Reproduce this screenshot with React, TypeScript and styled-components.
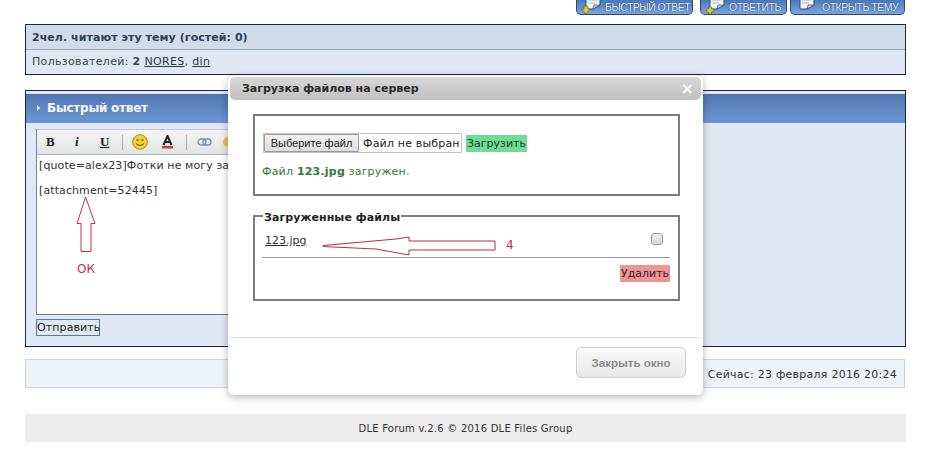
import React from "react";
import styled, { createGlobalStyle } from "styled-components";

const Global = createGlobalStyle`
  html, body { margin: 0; padding: 0; background: #fff; }
  body { font-family: "DejaVu Sans", Verdana, sans-serif; font-size: 11px; color: #333; }
`;

const Page = styled.div`
  position: relative;
  width: 933px;
  height: 458px;
  overflow: hidden;
  padding: 0 27px 0 25px;
  box-sizing: border-box;
`;

const TopBar = styled.div`
  display: flex;
  justify-content: flex-end;
  height: 15px;
  gap: 3px;
  padding-right: 1px;
`;

const TopButton = styled.div<{ $w: number; $ml?: number }>`
  width: ${(p) => p.$w}px;
  margin-left: ${(p) => p.$ml ?? 0}px;
  height: 15px;
  box-sizing: border-box;
  display: flex;
  align-items: center;
  border: 1px solid #2b4a70;
  border-top: 0;
  border-radius: 0 0 5px 5px;
  background: linear-gradient(#4a78b8, #7ba6e0);
  overflow: hidden;
  font: 10.5px "Liberation Sans", Arial, sans-serif;
  letter-spacing: -0.5px;
  color: #e9f2ff;
  text-shadow: 0 0 1px #1d3f72, 0 0 1px #1d3f72;
  white-space: nowrap;
`;

const TopIcon = styled.svg`
  flex: none;
  margin: 0 2px 0 4px;
`;

const TopLabel = styled.span<{ $pad: number }>`
  padding-left: ${(p) => p.$pad}px;
`;

const OnlineBox = styled.section`
  margin-top: 9px;
  width: 881px;
  height: 51px;
  box-sizing: border-box;
  border: 1px solid #13293f;
  background: #e0e7f2;
`;

const OnlineHead = styled.div`
  height: 25px;
  box-sizing: border-box;
  padding: 0 6px;
  display: flex;
  align-items: center;
  background: #d0dcea;
  border-bottom: 1px solid #93a3b5;
  font-weight: bold;
  color: #2f4058;
  letter-spacing: 0.06px;
`;

const OnlineRow = styled.div`
  height: 24px;
  padding: 0 6px;
  line-height: 24px;
  white-space: pre;
  color: #3a4450;
  letter-spacing: 0.33px;
`;

const UserLink = styled.a`
  color: #2c3a4c;
  text-decoration: underline;
`;

const ReplyBox = styled.section`
  position: relative;
  margin-top: 15px;
  width: 881px;
  height: 257px;
  box-sizing: border-box;
  border: 1px solid #13293f;
  background: #e0e8f3;
  padding: 3px 0 0 0;
`;

const ReplyHead = styled.div`
  height: 29px;
  box-sizing: border-box;
  padding: 0 0 2px 11px;
  display: flex;
  align-items: center;
  gap: 7px;
  background: linear-gradient(#5076b2, #6c98d6);
  font: bold 12px "DejaVu Sans", Verdana, sans-serif;
  color: #f4f7fc;
  letter-spacing: -0.25px;
`;

const Bullet = styled.span`
  width: 0;
  height: 0;
  border-left: 3px solid #e8eef8;
  border-top: 3px solid transparent;
  border-bottom: 3px solid transparent;
`;

const ReplyBody = styled.div`
  padding: 6px 0 0 10px;
`;

const Editor = styled.div`
  position: relative;
  width: 640px;
  height: 186px;
  box-sizing: border-box;
  border-left: 1px solid #6f8aa8;
  border-bottom: 1px solid #5d7a9c;
  background: #fff;
`;

const Toolbar = styled.div`
  height: 26px;
  box-sizing: border-box;
  display: flex;
  align-items: center;
  padding-left: 9px;
  background: linear-gradient(#f5f5f5, #e2e3e4);
  border-top: 1px solid #c3c9d0;
  border-bottom: 1px solid #aab4c0;
  color: #222;
`;

const ToolLetter = styled.span<{ $w: number; $i?: boolean; $u?: boolean }>`
  width: ${(p) => p.$w}px;
  font: ${(p) => (p.$i ? "italic bold" : "bold")} 13px "Liberation Serif", serif;
  text-decoration: ${(p) => (p.$u ? "underline" : "none")};
`;

const ToolSep = styled.span<{ $ml: number; $mr: number }>`
  width: 1px;
  height: 15px;
  margin: 0 ${(p) => p.$mr}px 0 ${(p) => p.$ml}px;
  background: #a8aeb5;
`;

const ToolIcon = styled.svg<{ $mr?: number }>`
  flex: none;
  margin-right: ${(p) => p.$mr ?? 0}px;
`;

const EditorText = styled.div`
  padding: 5px 0 0 2px;
  line-height: 12.5px;
  color: #333;
  letter-spacing: 0.1px;
  white-space: pre;
`;

const UpArrow = styled.svg`
  position: absolute;
  left: 39px;
  top: 67px;
`;

const OkNote = styled.span`
  position: absolute;
  left: 40px;
  top: 133px;
  color: #c8303f;
  font: 12px "DejaVu Sans", sans-serif;
`;

const SendButton = styled.button`
  display: block;
  margin-top: 4px;
  width: 64px;
  height: 17px;
  padding: 0;
  box-sizing: border-box;
  border: 1px solid #5d7a9c;
  background: #e0e8f3;
  color: #222;
  font: 11px "DejaVu Sans", sans-serif;
  letter-spacing: 0.1px;
`;

const NavBar = styled.div`
  margin-top: 12px;
  width: 880px;
  height: 29px;
  box-sizing: border-box;
  border: 1px solid #cbd3dc;
  background: #eef3f8;
  display: flex;
  align-items: center;
  justify-content: flex-end;
  padding: 1px 7px 0 0;
  color: #333;
  letter-spacing: 0.24px;
`;

const Footer = styled.footer`
  margin-top: 26px;
  width: 881px;
  height: 28px;
  background: #ededed;
  display: flex;
  align-items: center;
  justify-content: center;
  font-size: 10px;
  color: #333;
  letter-spacing: 0.23px;
`;

const Modal = styled.div`
  position: absolute;
  left: 228px;
  top: 76px;
  width: 475px;
  height: 319px;
  box-sizing: border-box;
  padding: 1px 2px 0 2px;
  background: #fff;
  border-radius: 6px;
  box-shadow: 0 2px 8px rgba(0, 0, 0, 0.3);
  display: flex;
  flex-direction: column;
`;

const ModalHead = styled.div`
  height: 23px;
  flex: none;
  box-sizing: border-box;
  padding: 0 7px 0 12px;
  display: flex;
  align-items: center;
  justify-content: space-between;
  border-radius: 5px;
  background: linear-gradient(#d8d8d8, #c0c0c0);
  font-weight: bold;
  color: #2a2a2a;
`;

const CloseX = styled.span`
  color: #fff;
  font: bold 16px "DejaVu Sans", sans-serif;
  line-height: 1;
`;

const ModalBody = styled.div`
  flex: 1;
  padding: 14px 21px 0 23px;
`;

const UploadPanel = styled.div`
  height: 82px;
  box-sizing: border-box;
  border: 2px solid #7c7c7c;
  padding: 17px 0 0 8px;
`;

const UploadRow = styled.div`
  display: flex;
  align-items: center;
`;

const FakeFile = styled.div`
  display: flex;
  height: 20px;
  width: 199px;
  box-sizing: border-box;
  border: 1px solid #c4c4c4;
  align-items: center;
  letter-spacing: 0.18px;
  color: #222;
  white-space: nowrap;
`;

const ChooseButton = styled.span`
  width: 95px;
  height: 18px;
  margin-right: 4px;
  box-sizing: border-box;
  flex: none;
  display: flex;
  align-items: center;
  justify-content: center;
  background: linear-gradient(#f2f2f2, #dedede);
  border: 1px solid #9a9a9a;
  border-radius: 1px;
  font: 11px "Liberation Sans", Arial, sans-serif;
  letter-spacing: 0;
`;

const UploadButton = styled.button`
  margin-left: 4px;
  width: 61px;
  height: 17px;
  padding: 0;
  border: 0;
  background: #6edc92;
  color: #1f3a2a;
  font: 11px "DejaVu Sans", sans-serif;
`;

const Status = styled.p`
  margin: 12px 0 0 -1px;
  color: #35793a;
  letter-spacing: 0.2px;
`;

const FilesPanel = styled.fieldset`
  position: relative;
  margin: 12px 0 0 0;
  padding: 0 8px 0 7px;
  height: 93px;
  box-sizing: border-box;
  border: 2px solid #7c7c7c;
  min-width: 0;
`;

const FilesLegend = styled.legend`
  padding: 3px 1px 0;
  margin-left: 1px;
  font-weight: bold;
  color: #222;
  letter-spacing: 0.08px;
`;

const FileRow = styled.div`
  position: relative;
  height: 28px;
  display: flex;
  align-items: center;
  justify-content: space-between;
  padding: 0 7px 0 3px;
  margin-top: 5px;
  border-bottom: 1px solid #999;
`;

const FileLink = styled.a`
  color: #333;
  text-decoration: underline;
  margin-top: -5px;
`;

const FileCheck = styled.span`
  width: 12px;
  height: 12px;
  margin-top: -8px;
  box-sizing: border-box;
  border: 1px solid #9a9a9a;
  border-radius: 3px;
  background: linear-gradient(#eee, #d8d8d8);
`;

const LeftArrow = styled.svg`
  position: absolute;
  left: 60px;
  top: 7px;
`;

const NoteFour = styled.span`
  position: absolute;
  left: 244px;
  top: 9px;
  color: #c8303f;
  font: 12px "DejaVu Sans", sans-serif;
`;

const DeleteRow = styled.div`
  display: flex;
  justify-content: flex-end;
  margin-top: 7px;
`;

const DeleteButton = styled.button`
  width: 50px;
  height: 17px;
  padding: 0;
  border: 0;
  background: #ee9497;
  color: #3a1a1a;
  font: 11px "DejaVu Sans", sans-serif;
`;

const ModalFoot = styled.div`
  flex: none;
  height: 58px;
  box-sizing: border-box;
  border-top: 1px solid #e2e2e2;
  padding: 9px 15px 0 0;
  display: flex;
  justify-content: flex-end;
  align-items: flex-start;
`;

const CloseButton = styled.button`
  width: 110px;
  height: 31px;
  padding: 0;
  border: 1px solid #ccc;
  border-radius: 5px;
  background: linear-gradient(#fafafa, #e8e8e8);
  color: #8c8c8c;
  font: bold 11.5px "Liberation Sans", Arial, sans-serif;
`;

const Doc = ({ d }: { d: number }) => (
  <TopIcon width="22" height="14" viewBox="0 0 22 14">
    <path d="M5 -3 L19 -3 L19 5 L12 9 L5 9 Z" fill="#f4f7fb" stroke="#2d4a70" strokeWidth="1" />
    <path d="M12 9 L13 5 L19 5 Z" fill="#c9d6e6" stroke="#2d4a70" strokeWidth="0.7" />
    <path d="M7 0 H16 M7 3 H14" stroke="#9fb2c9" strokeWidth="1" />
    {d === 1 && <path d="M3 6 H7 V9 H9.5 L5 14 L0.5 9 H3 Z" fill="#e6c53a" stroke="#5a5a20" strokeWidth="0.6" />}
    {d === 2 && <path d="M3.5 7 H6.5 V9 H8.5 V12 H6.5 V14 H3.5 V12 H1.5 V9 H3.5 Z" fill="#e6c53a" stroke="#5a5a20" strokeWidth="0.6" />}
  </TopIcon>
);

export default function App() {
  return (
    <>
      <Global />
      <Page>
        <TopBar>
          <TopButton $w={117}>
            <Doc d={1} />
            <TopLabel $pad={0}>БЫСТРЫЙ ОТВЕТ</TopLabel>
          </TopButton>
          <TopButton $w={87} $ml={4}>
            <Doc d={2} />
            <TopLabel $pad={0}>ОТВЕТИТЬ</TopLabel>
          </TopButton>
          <TopButton $w={115}>
            <Doc d={0} />
            <TopLabel $pad={3}>ОТКРЫТЬ ТЕМУ</TopLabel>
          </TopButton>
        </TopBar>

        <OnlineBox>
          <OnlineHead>2чел. читают эту тему (гостей: 0)</OnlineHead>
          <OnlineRow>
            Пользователей: <b>2</b> <UserLink>NORES</UserLink>, <UserLink>din</UserLink>
          </OnlineRow>
        </OnlineBox>

        <ReplyBox>
          <ReplyHead>
            <Bullet />
            Быстрый ответ
          </ReplyHead>
          <ReplyBody>
            <Editor>
              <Toolbar>
                <ToolLetter $w={29}>B</ToolLetter>
                <ToolLetter $w={25} $i>i</ToolLetter>
                <ToolLetter $w={11} $u>U</ToolLetter>
                <ToolSep $ml={11} $mr={9} />
                <ToolIcon width="16" height="16" viewBox="0 0 16 16" $mr={13}>
                  <circle cx="8" cy="8" r="7.3" fill="#f2d22e" stroke="#b08a18" />
                  <circle cx="5.6" cy="6" r="1" fill="#5a4a10" />
                  <circle cx="10.4" cy="6" r="1" fill="#5a4a10" />
                  <path d="M4 9.5 Q8 13.5 12 9.5" fill="none" stroke="#5a4a10" />
                </ToolIcon>
                <ToolIcon width="13" height="14" viewBox="0 0 13 14">
                  <path d="M2.5 10 L6.5 1 L10.5 10 M4.2 7 H8.8" fill="none" stroke="#222" strokeWidth="2" />
                  <rect x="1" y="11" width="11" height="2.5" fill="#c8403a" />
                </ToolIcon>
                <ToolSep $ml={12} $mr={10} />
                <ToolIcon width="15" height="10" viewBox="0 0 15 10" $mr={9}>
                  <rect x="1" y="2" width="8" height="6" rx="3" fill="none" stroke="#6d8fb8" strokeWidth="1.3" />
                  <rect x="6" y="2" width="8" height="6" rx="3" fill="none" stroke="#6d8fb8" strokeWidth="1.3" />
                </ToolIcon>
                <ToolIcon width="14" height="14" viewBox="0 0 14 14">
                  <circle cx="7" cy="7" r="5" fill="#e8c050" />
                </ToolIcon>
              </Toolbar>
              <EditorText>
                {"[quote=alex23]Фотки не могу за"}
                {"\n\n[attachment=52445]"}
              </EditorText>
              <UpArrow width="20" height="57" viewBox="0 0 20 57">
                <path d="M9.5 1 L1 27.5 H5 V55.5 H15 V27.5 H19 Z" fill="#fff" stroke="#c8303f" strokeWidth="1" />
              </UpArrow>
              <OkNote>ОК</OkNote>
            </Editor>
            <SendButton>Отправить</SendButton>
          </ReplyBody>
        </ReplyBox>

        <NavBar>Сейчас: 23 февраля 2016 20:24</NavBar>
        <Footer>DLE Forum v.2.6 © 2016 DLE Files Group</Footer>

        <Modal>
          <ModalHead>
            Загрузка файлов на сервер
            <CloseX>×</CloseX>
          </ModalHead>
          <ModalBody>
            <UploadPanel>
              <UploadRow>
                <FakeFile>
                  <ChooseButton>Выберите файл</ChooseButton>
                  Файл не выбран
                </FakeFile>
                <UploadButton>Загрузить</UploadButton>
              </UploadRow>
              <Status>
                Файл <b>123.jpg</b> загружен.
              </Status>
            </UploadPanel>
            <FilesPanel>
              <FilesLegend>Загруженные файлы</FilesLegend>
              <FileRow>
                <FileLink>123.jpg</FileLink>
                <FileCheck />
                <LeftArrow width="175" height="20" viewBox="0 0 175 20">
                  <path d="M1 9.5 L74 3 L87 1 V5 H173 V14 H87 V19 L54 13 L1 10.5 Z" fill="#fff" stroke="#b5303c" strokeWidth="1" />
                </LeftArrow>
                <NoteFour>4</NoteFour>
              </FileRow>
              <DeleteRow>
                <DeleteButton>Удалить</DeleteButton>
              </DeleteRow>
            </FilesPanel>
          </ModalBody>
          <ModalFoot>
            <CloseButton>Закрыть окно</CloseButton>
          </ModalFoot>
        </Modal>
      </Page>
    </>
  );
}
